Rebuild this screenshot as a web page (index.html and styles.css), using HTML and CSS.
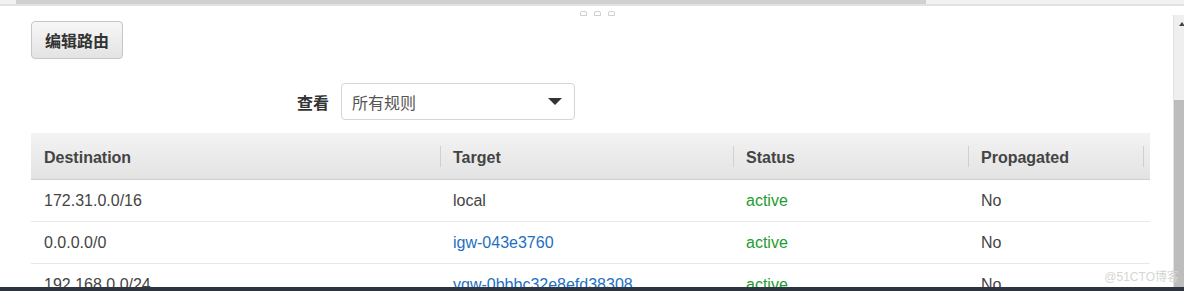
FILE: index.html
```html
<!DOCTYPE html>
<html lang="zh-CN">
<head>
  <meta charset="UTF-8" />
  <title>路由表</title>
  <link rel="stylesheet" href="styles.css">
</head>
<body>
  <!-- 顶部横向滚动条 -->
  <div class="hscroll"><div class="hscroll-thumb"></div></div>

  <div class="main">
    <div class="content">
      <div class="grip"><span></span><span></span><span></span></div>

      <button class="btn">编辑路由</button>

      <div class="filter">
        <span class="filter-label">查看</span>
        <div class="select">
          <span>所有规则</span>
          <span class="caret"></span>
        </div>
      </div>

      <table class="routes">
        <thead>
          <tr>
            <th class="c1">Destination</th>
            <th class="c2">Target</th>
            <th class="c3">Status</th>
            <th class="c4">Propagated</th>
          </tr>
        </thead>
        <tbody>
          <tr>
            <td>172.31.0.0/16</td>
            <td>local</td>
            <td class="ok">active</td>
            <td>No</td>
          </tr>
          <tr>
            <td>0.0.0.0/0</td>
            <td><a href="#" class="link">igw-043e3760</a></td>
            <td class="ok">active</td>
            <td>No</td>
          </tr>
          <tr>
            <td>192.168.0.0/24</td>
            <td><a href="#" class="link">vgw-0bbbc32e8efd38308</a></td>
            <td class="ok">active</td>
            <td>No</td>
          </tr>
        </tbody>
      </table>
    </div>

    <!-- 右侧滚动条 -->
    <div class="vscroll">
      <div class="vscroll-arrow"></div>
      <div class="vscroll-thumb"></div>
    </div>

    <div class="watermark">@51CTO博客</div>
  </div>

  <div class="taskbar"></div>
</body>
</html>
```

FILE: styles.css
```css
/* 基础布局 */
body {
  margin: 0;
  height: 291px;
  overflow: hidden;
  display: flex;
  flex-direction: column;
  background: #fff;
  color: #444;
  font-family: "Liberation Sans", Arial, "Noto Sans CJK SC", sans-serif;
  font-size: 16px;
}

.hscroll {
  height: 4px;
  background: #f1f1f1;
  border-bottom: 2px solid #e2e2e2;
  padding-left: 16px;
}
.hscroll-thumb { width: 910px; height: 4px; background: #d0d0d0; }

.main {
  flex: 1;
  display: flex;
  overflow: hidden;
  position: relative;
}
.content {
  flex: 1;
  padding-left: 31px;
  padding-right: 22px;
  position: relative;
}

.grip {
  position: absolute;
  top: 5px;
  left: 580px;
  display: flex;
  gap: 7px;
}
.grip span {
  width: 5px;
  height: 3px;
  border: 1px solid #cfcfcf;
  border-radius: 2px 2px 0 0;
}

.btn {
  display: block;
  margin-top: 15px;
  height: 38px;
  width: 92px;
  padding: 0;
  border: 1px solid #c6c6c6;
  border-radius: 4px;
  background: linear-gradient(#f7f7f7, #e3e3e3);
  color: #333;
  font-family: "Noto Sans CJK SC", sans-serif;
  font-weight: bold;
  font-size: 16px;
}

.filter {
  display: flex;
  align-items: center;
  margin-top: 24px;
  padding-left: 266px;
}
.filter-label {
  font-family: "Noto Sans CJK SC", sans-serif;
  font-weight: bold;
  font-size: 16px;
  color: #333;
  margin-right: 12px;
}
.select {
  width: 210px;
  height: 35px;
  padding: 0 12px 0 10px;
  border: 1px solid #d5d5d5;
  border-radius: 4px;
  display: flex;
  align-items: center;
  justify-content: space-between;
  font-family: "Noto Sans CJK SC", sans-serif;
  font-size: 16px;
  color: #555;
}
.caret {
  width: 0;
  height: 0;
  border-left: 7px solid transparent;
  border-right: 7px solid transparent;
  border-top: 7px solid #333;
}

/* 路由表 */
.routes {
  margin-top: 13px;
  width: 1119px;
  border-collapse: collapse;
  table-layout: fixed;
}
.routes th {
  height: 42px;
  padding: 4px 13px 0;
  text-align: left;
  font-weight: bold;
  color: #444;
  background: linear-gradient(#f3f3f3, #e3e3e3);
  border-bottom: 1px solid #cfcfcf;
  position: relative;
}
.routes th + th::before,
.routes th.c4::after {
  content: "";
  position: absolute;
  left: 0;
  top: 13px;
  bottom: 12px;
  border-left: 1px solid #d0d0d0;
}
.routes th.c4::after { left: auto; right: 6px; }
.c1 { width: 383px; }
.c2 { width: 267px; }
.c3 { width: 209px; }
.routes td {
  height: 40px;
  padding: 1px 13px 0;
  border-bottom: 1px solid #e8e8e8;
  color: #444;
}
.routes td.ok { color: #1e9c2e; }
.link { color: #1e6fc4; text-decoration: none; }

.vscroll {
  width: 10px;
  margin-top: 9px;
  background: #efefef;
  border-left: 1px solid #e2e2e2;
  display: flex;
  flex-direction: column;
}
.vscroll-arrow {
  height: 0;
  margin: 7px 0 0 5px;
  border-left: 3px solid transparent;
  border-right: 3px solid transparent;
  border-bottom: 4px solid #444;
  width: 0;
}
.vscroll-thumb { margin-top: 74px; flex: 1; background: #bdbdbd; }

.watermark {
  position: absolute;
  right: 5px;
  bottom: 3px;
  font-size: 12px;
  color: #d6d6d6;
  font-family: "Liberation Sans", "Noto Sans CJK SC", sans-serif;
}

.taskbar { height: 4px; background: #2b3541; }
```
